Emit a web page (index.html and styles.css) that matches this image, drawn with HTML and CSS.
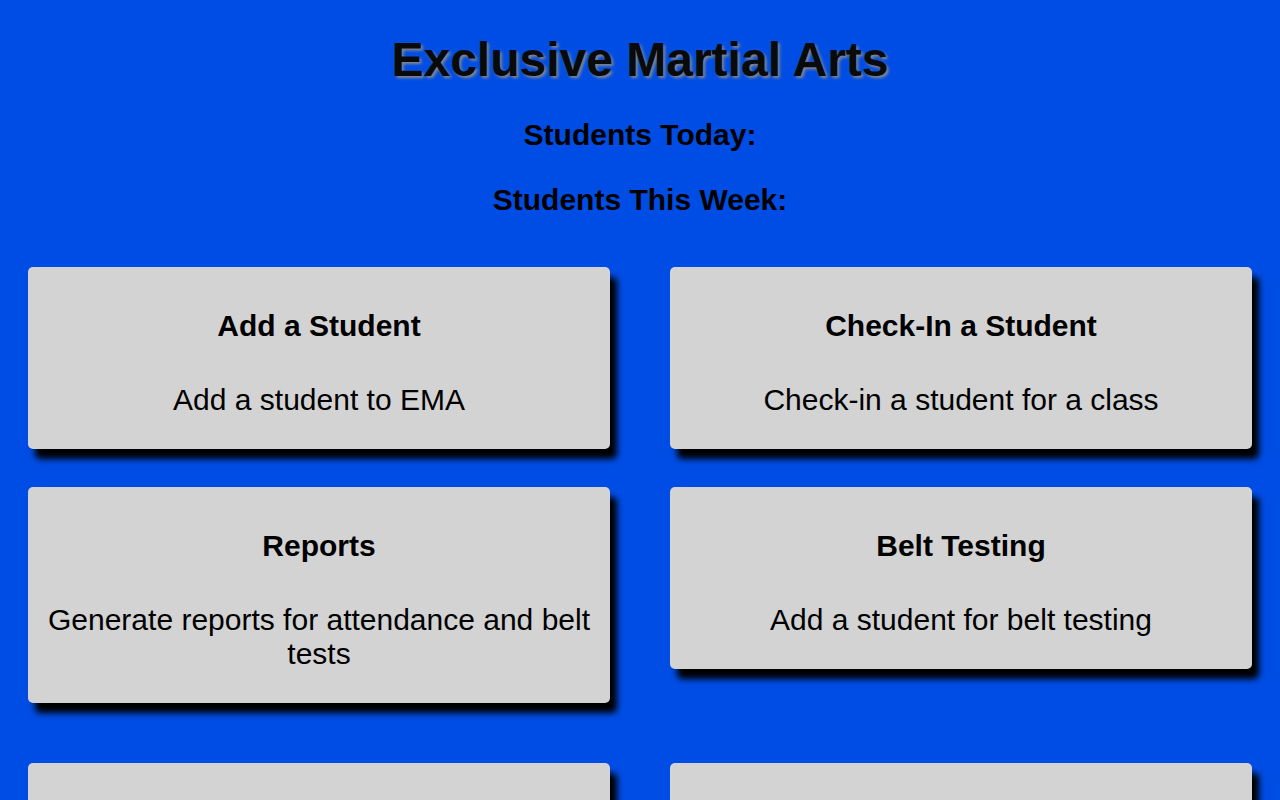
FILE: index.html
```html
<!DOCTYPE html>
<html lang="en">
<head>
<meta charset="utf-8">
<title>Exclusive Martial Arts</title>
<link rel="stylesheet" href="styles.css">
</head>
<body>
<header class="header">
  <h1 class="title">Exclusive Martial Arts</h1>
  <h2 class="stat">Students Today:</h2>
  <h2 class="stat">Students This Week:</h2>
</header>
<main class="grid">
  <a class="card" href="#">
    <h3 class="card-title">Add a Student</h3>
    <p class="card-desc">Add a student to EMA</p>
  </a>
  <a class="card" href="#">
    <h3 class="card-title">Check-In a Student</h3>
    <p class="card-desc">Check-in a student for a class</p>
  </a>
  <a class="card" href="#">
    <h3 class="card-title">Reports</h3>
    <p class="card-desc">Generate reports for attendance and belt tests</p>
  </a>
  <a class="card" href="#">
    <h3 class="card-title">Belt Testing</h3>
    <p class="card-desc">Add a student for belt testing</p>
  </a>
  <a class="card card-spaced" href="#">
    <h3 class="card-title">Student List</h3>
    <p class="card-desc">View and edit all students</p>
  </a>
  <a class="card card-spaced" href="#">
    <h3 class="card-title">Settings</h3>
    <p class="card-desc">Manage classes and belts</p>
  </a>
</main>
</body>
</html>
```

FILE: styles.css
```css
html, body {
  margin: 0;
  padding: 0;
}
body {
  background: #004de5;
  font-family: "Liberation Sans", Arial, sans-serif;
  color: #000;
}
.header {
  padding-top: 32px;
  text-align: center;
}
.title {
  margin: 0 0 31px;
  font-size: 48px;
  line-height: 55px;
  font-weight: bold;
  color: #0a0a0a;
  text-shadow: 2px 2px 3px #888;
}
.stat {
  margin: 0 0 31px;
  font-size: 30px;
  line-height: 34px;
  font-weight: bold;
}
.stat:last-child {
  margin-bottom: 50px;
}
.grid {
  display: grid;
  grid-template-columns: 1fr 1fr;
  column-gap: 60px;
  row-gap: 38px;
  padding: 0 28px 40px;
  align-items: start;
}
.card {
  display: block;
  background: #d3d3d3;
  border-radius: 5px;
  box-shadow: 7px 10px 6px #000;
  padding: 42px 16px 32px;
  text-align: center;
  text-decoration: none;
  color: #000;
}
.card-spaced {
  margin-top: 22px;
}
.card-title {
  margin: 0;
  font-size: 30px;
  line-height: 34px;
  font-weight: bold;
}
.card-desc {
  margin: 40px 0 0;
  font-size: 30px;
  line-height: 34px;
}
```
